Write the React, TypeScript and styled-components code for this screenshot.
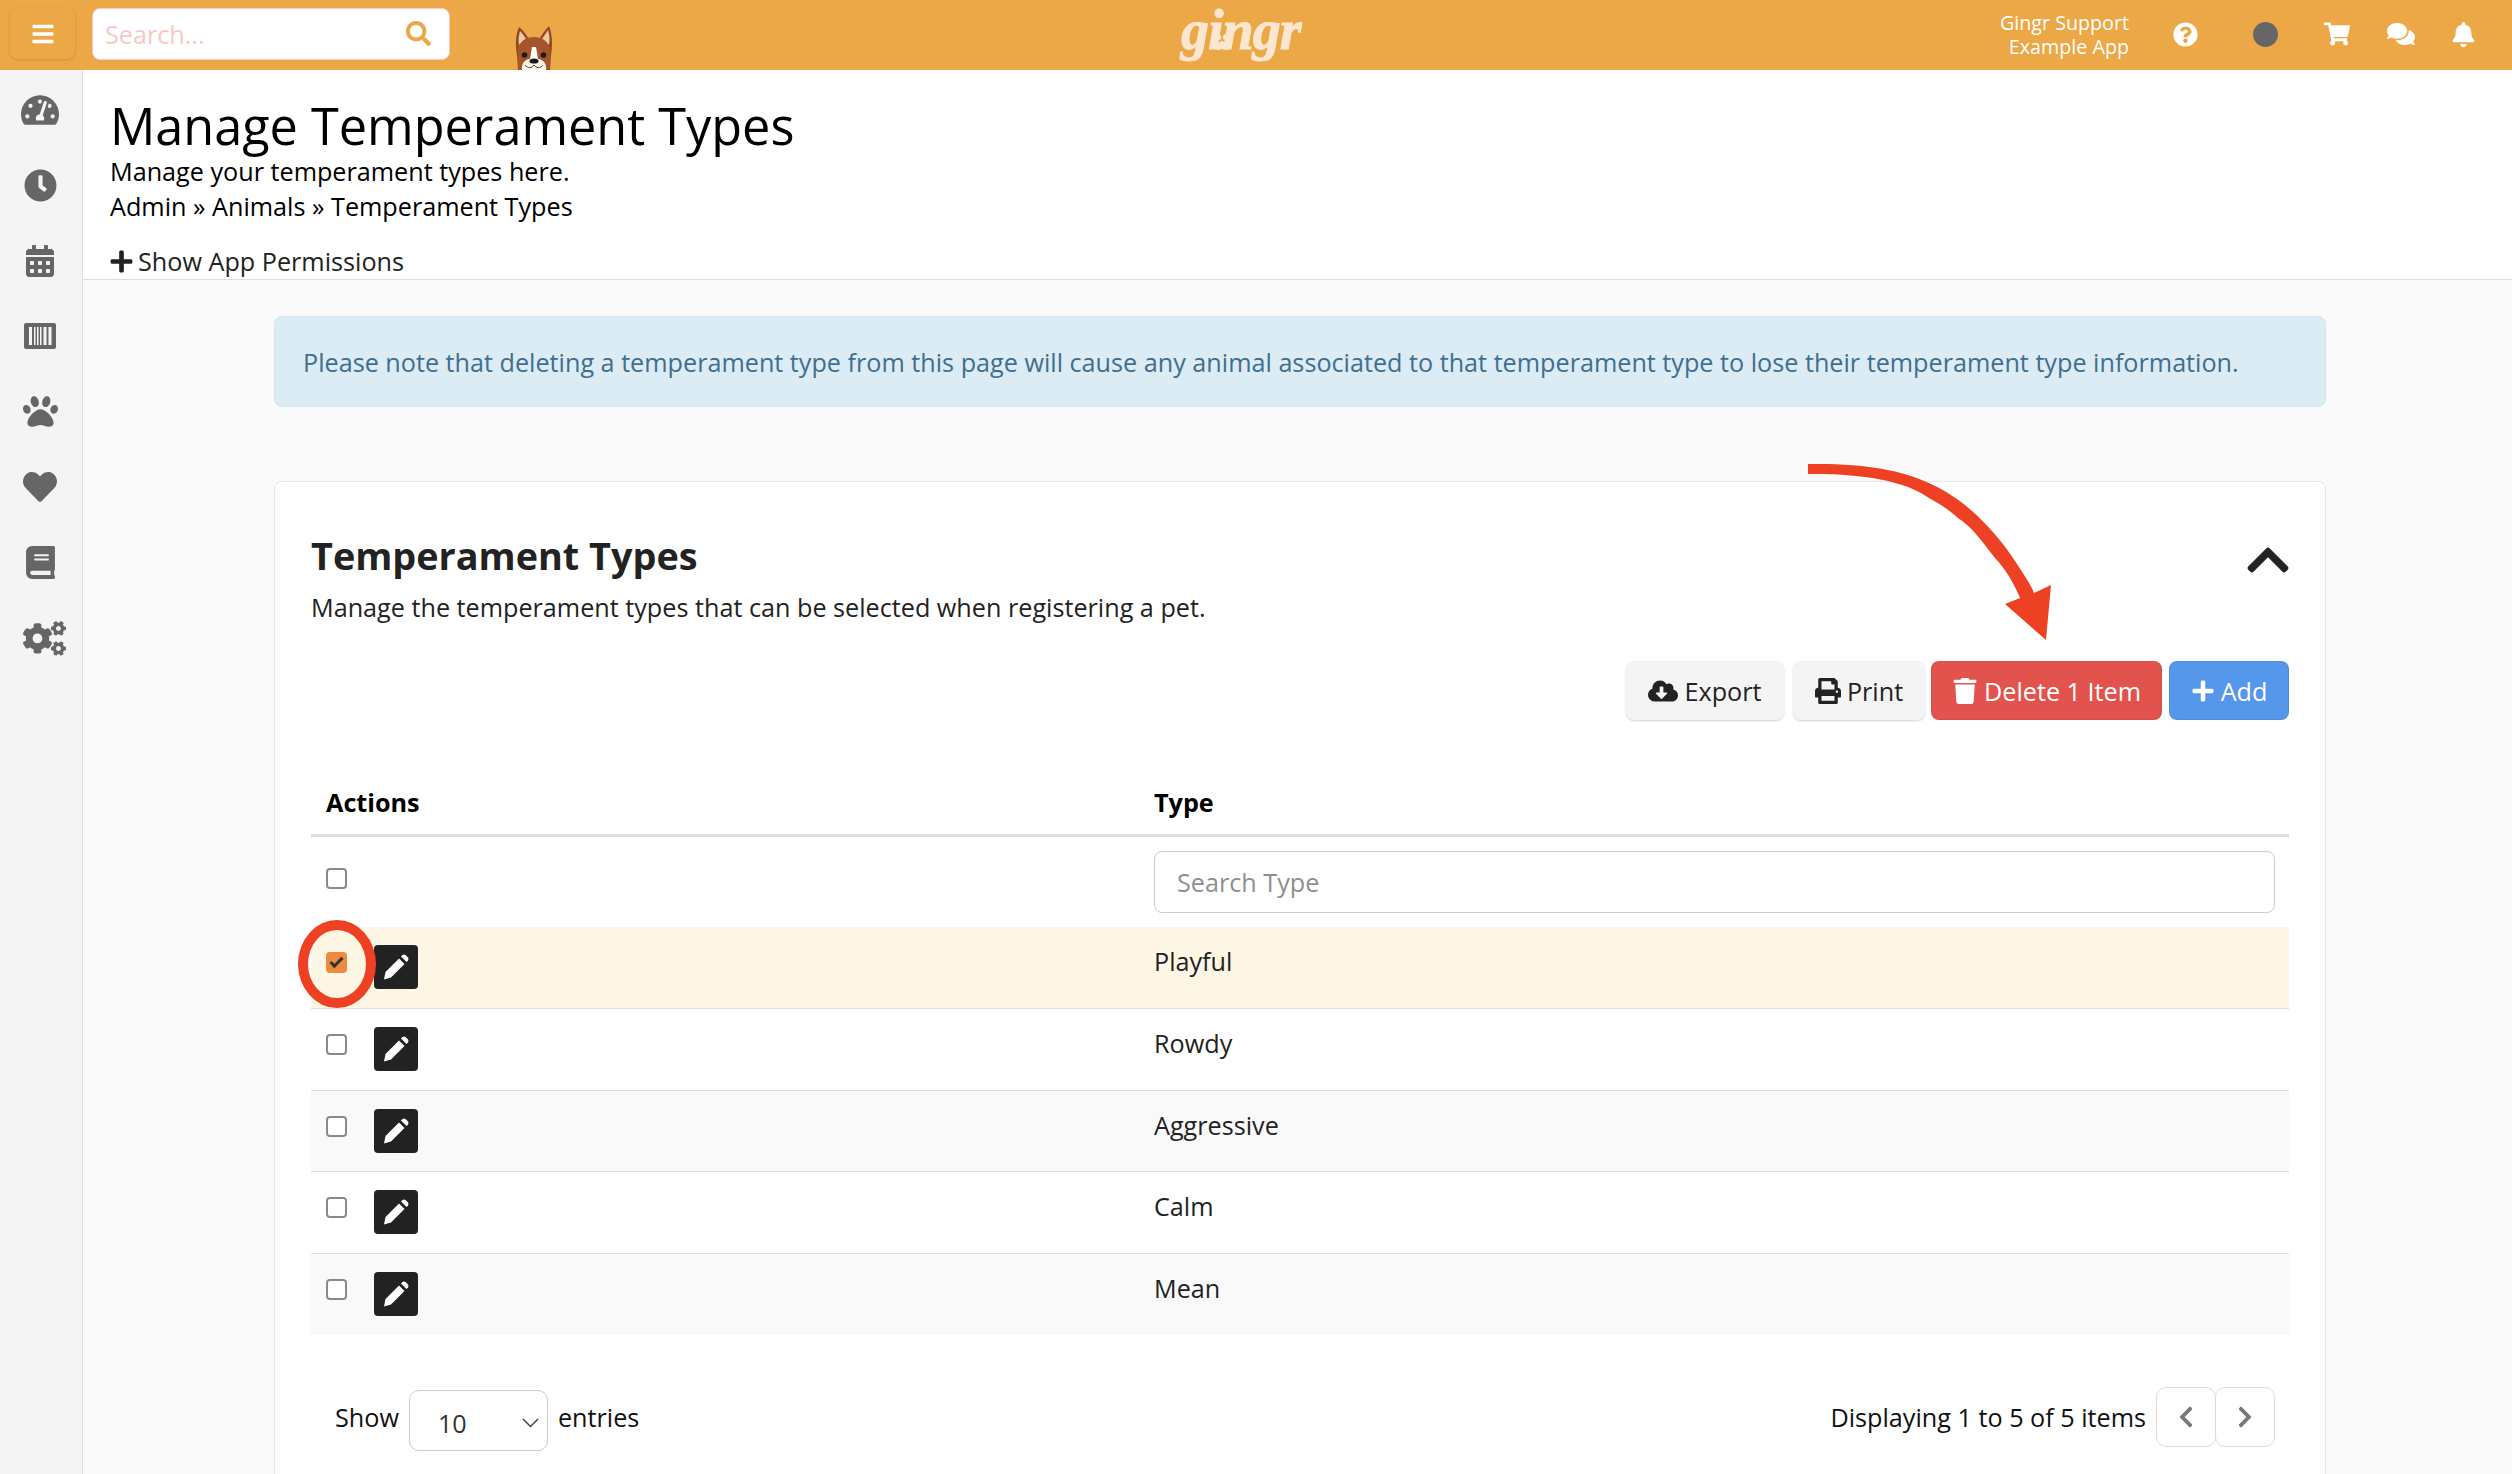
import * as React from 'react';
import styled, { createGlobalStyle } from 'styled-components';
import {
  FaBars,
  FaSearch,
  FaQuestionCircle,
  FaShoppingCart,
  FaComments,
  FaBell,
  FaTachometerAlt,
  FaClock,
  FaCalendarAlt,
  FaPaw,
  FaHeart,
  FaBook,
  FaCogs,
  FaPlus,
  FaChevronUp,
  FaChevronLeft,
  FaChevronRight,
  FaCloudDownloadAlt,
  FaPrint,
  FaTrash,
} from 'react-icons/fa';

const rows = ['Playful', 'Rowdy', 'Aggressive', 'Calm', 'Mean'];

const GlobalStyle = createGlobalStyle`
  html, body {
    margin: 0;
    height: 1474px;
    overflow: hidden;
    background: #fff;
    font-family: "Open Sans", "Liberation Sans", sans-serif;
    font-size: 25.2px;
    color: #000;
  }
`;

/** 바코드 아이콘 */
const BarcodeIcon = () => (
  <svg width="32" height="26" viewBox="0 0 32 26">
    <rect width="32" height="26" rx="2" fill="#666" />
    <path
      d="M5 4h3v18H5zM10 4h1.5v18H10zM13 4h1.5v18H13zM16 4h1.5v18H16zM19.5 4h3v18h-3zM24.5 4h3v18h-3z"
      fill="#f4f4f4"
    />
  </svg>
);

/** 상단 강아지 */
const DogIcon = () => (
  <svg width="38" height="45" viewBox="0 0 38 45">
    <path d="M2 30 C0 18 1 9 4 2 C8 5 11 9 13 13 L25 13 C28 8 31 4 34 1 C37 9 38 19 36 30 L35 45 L3 45 Z" fill="#8f4a25" />
    <path d="M4 20 C3 14 4 10 5 6 C7 8 9.500 11 11 14 Z" fill="#eec9a4" />
    <path d="M27 14 C29 11 31 8 33 5 C34.500 10 35 15 34 20 Z" fill="#eec9a4" />
    <path d="M3 45 L3 24 C5 16 11 12 19 12 C27 12 33 16 35 24 L35 45 Z" fill="#a5552b" />
    <path d="M17 22 L21 22 L23 34 L15 34 Z" fill="#fff" />
    <path d="M7 45 C6 40 9 35 14 34 L24 34 C29 35 32 40 31 45 Z" fill="#fbf3e8" />
    <circle cx="9.500" cy="30" r="2.800" fill="#1d1a18" />
    <circle cx="28.500" cy="30" r="2.800" fill="#1d1a18" />
    <ellipse cx="19" cy="36" rx="4.500" ry="2.600" fill="#1d1a18" />
    <path d="M10 40 C13 44 17 43 19 40 C21 43 25 44 28 40" stroke="#5a4030" strokeWidth="1" fill="none" />
  </svg>
);

/** 수정 버튼 연필 */
const PencilIcon = () => (
  <svg width="26" height="26" viewBox="0 0 26 26">
    <path d="M1 25.500 L2.500 18 L16 4.500 L21.500 10 L8 23.500 Z" fill="#fff" />
    <path d="M18 2.500 L19.500 1 Q21 0 22.500 1 L25 3.500 Q26 5 25 6.500 L23.500 8 Z" fill="#fff" />
  </svg>
);

const Arrow = () => (
  <svg width="260" height="185" viewBox="0 0 260 185">
    <path
      d="M8 3 C60 2 100 8 131 23 C165 38 195 70 213 97 C225 115 232 126 234 132 L251 124 L246 179 L205 143 L220 137 C212 118 205 108 195 97 C180 78 172 66 158 57 C145 45 130 38 121 32 C100 20 60 12 8 13 Z"
      fill="#ee4023"
    />
  </svg>
);

const App = () => {
  return (
    <Page>
      <GlobalStyle />
      <Topbar>
        <MenuButton>
          <FaBars size={24} />
        </MenuButton>
        <SearchBox>
          <SearchInput placeholder="Search..." />
          <FaSearch size={25} color="#eca746" />
        </SearchBox>
        <Dog>
          <DogIcon />
        </Dog>
        <Logo>
          <LogoPaw>
            <FaPaw size={18} />
          </LogoPaw>
          gingr
        </Logo>
        <TopRight>
          <UserName>
            Gingr Support
            <br />
            Example App
          </UserName>
          <TopIcon $width={70}>
            <FaQuestionCircle size={25} />
          </TopIcon>
          <TopIcon $width={90}>
            <Avatar />
          </TopIcon>
          <TopIcon $width={54}>
            <FaShoppingCart size={26} />
          </TopIcon>
          <TopIcon $width={74}>
            <FaComments size={28} />
          </TopIcon>
          <TopIcon $width={50}>
            <FaBell size={25} />
          </TopIcon>
        </TopRight>
      </Topbar>
      <Body>
        <Sidebar>
          <SideItem><FaTachometerAlt size={38} /></SideItem>
          <SideItem><FaClock size={33} /></SideItem>
          <SideItem><FaCalendarAlt size={32} /></SideItem>
          <SideItem><BarcodeIcon /></SideItem>
          <SideItem><FaPaw size={35} /></SideItem>
          <SideItem><FaHeart size={34} /></SideItem>
          <SideItem><FaBook size={33} /></SideItem>
          <SideItem $shift={8}><FaCogs size={43} /></SideItem>
        </Sidebar>
        <Main>
          <PageHeader>
            <PageTitle>Manage Temperament Types</PageTitle>
            <HeaderLine>Manage your temperament types here.</HeaderLine>
            <HeaderLine>Admin » Animals » Temperament Types</HeaderLine>
            <PermissionLine>
              <FaPlus size={25} />
              Show App Permissions
            </PermissionLine>
          </PageHeader>
          <Content>
            <Alert>
              Please note that deleting a temperament type from this page will cause any animal
              associated to that temperament type to lose their temperament type information.
            </Alert>
            <Card>
              <ArrowMark>
                <Arrow />
              </ArrowMark>
              <CardHead>
                <CardTitle>Temperament Types</CardTitle>
                <Collapse>
                  <FaChevronUp size={48} />
                </Collapse>
              </CardHead>
              <CardText>Manage the temperament types that can be selected when registering a pet.</CardText>
              <Toolbar>
                <Button $width={158} $after={3}>
                  <FaCloudDownloadAlt size={30} />
                  Export
                </Button>
                <Button $width={132}>
                  <FaPrint size={26} />
                  Print
                </Button>
                <Button $width={231} $after={1} $kind="danger">
                  <FaTrash size={26} />
                  Delete 1 Item
                </Button>
                <Button $width={120} $kind="primary">
                  <FaPlus size={24} />
                  Add
                </Button>
              </Toolbar>
              <Table>
                <thead>
                  <tr>
                    <HeadCell $width={843}>Actions</HeadCell>
                    <HeadCell>Type</HeadCell>
                  </tr>
                </thead>
                <tbody>
                  <tr>
                    <FilterCell>
                      <Check type="checkbox" />
                    </FilterCell>
                    <FilterCell>
                      <FilterInput placeholder="Search Type" />
                    </FilterCell>
                  </tr>
                  {rows.map((name, index) => (
                    <Row key={name} $selected={index === 0} $odd={index % 2 === 0}>
                      <Cell>
                        <ActionGroup>
                          <Check type="checkbox" defaultChecked={index === 0} />
                          <EditButton>
                            <PencilIcon />
                          </EditButton>
                        </ActionGroup>
                        {index === 0 && <CheckRing />}
                      </Cell>
                      <Cell>{name}</Cell>
                    </Row>
                  ))}
                </tbody>
              </Table>
              <Footer>
                <Entries>
                  Show
                  <PageSize>
                    10
                    <svg width="17" height="10" viewBox="0 0 17 10">
                      <path d="M1 1l7.500 7.500L16 1" stroke="#444" strokeWidth="1.500" fill="none" />
                    </svg>
                  </PageSize>
                  entries
                </Entries>
                <Paging>
                  Displaying 1 to 5 of 5 items
                  <Pager>
                    <PagerButton><FaChevronLeft size={24} /></PagerButton>
                    <PagerButton><FaChevronRight size={24} /></PagerButton>
                  </Pager>
                </Paging>
              </Footer>
            </Card>
          </Content>
        </Main>
      </Body>
    </Page>
  );
};

const Page = styled.div`
  width: 2512px;
  height: 1474px;
  overflow: hidden;
  display: flex;
  flex-direction: column;
`;

const Topbar = styled.header`
  height: 70px;
  flex: none;
  display: flex;
  align-items: center;
  background: #eca746;
  color: #fff;
  padding: 0 24px 0 10px;
`;

const MenuButton = styled.div`
  width: 65px;
  height: 51px;
  margin-top: -3px;
  border-radius: 8px;
  display: flex;
  align-items: center;
  justify-content: center;
  background: #eca746;
  box-shadow: 0 1px 3px rgba(0, 0, 0, 0.14);
`;

const SearchBox = styled.div`
  width: 358px;
  height: 52px;
  margin: -3px 0 0 17px;
  box-sizing: border-box;
  padding: 0 18px 0 12px;
  display: flex;
  align-items: center;
  background: #fff;
  border: 1px solid #f8c9c4;
  border-radius: 8px;
`;

const SearchInput = styled.input`
  flex: 1;
  min-width: 0;
  border: 0;
  outline: 0;
  padding: 0;
  font: inherit;
  font-size: 25.2px;
  &::placeholder {
    color: #f8c9c4;
    opacity: 1;
  }
`;

const Dog = styled.div`
  align-self: flex-end;
  height: 45px;
  margin-left: 65px;
  svg {
    display: block;
  }
`;

const Logo = styled.div`
  position: relative;
  align-self: flex-start;
  margin-left: 628px;
  width: 122px;
  font-family: "Liberation Serif", serif;
  font-style: italic;
  font-weight: 700;
  font-size: 56px;
  line-height: 60px;
  color: #fbe7cf;
  letter-spacing: -1px;
  -webkit-text-stroke: 1px #fbe7cf;
`;

const LogoPaw = styled.span`
  position: absolute;
  left: 32px;
  top: 4px;
  line-height: 1;
`;

const TopRight = styled.div`
  margin-left: auto;
  display: flex;
  align-items: center;
`;

const UserName = styled.div`
  font-size: 19.7px;
  line-height: 24px;
  text-align: right;
  margin-right: 21px;
`;

const TopIcon = styled.div<{ $width: number }>`
  width: ${(props) => props.$width}px;
  display: flex;
  justify-content: center;
  margin-top: -2px;
`;

const Avatar = styled.div`
  width: 25px;
  height: 25px;
  border-radius: 50%;
  background: #666;
`;

const Body = styled.div`
  flex: 1;
  min-height: 0;
  display: flex;
`;

const Sidebar = styled.nav`
  width: 83px;
  flex: none;
  box-sizing: border-box;
  background: #f4f4f4;
  border-right: 1px solid #ddd;
  padding: 2px 2px 0 0;
  color: #666;
`;

const SideItem = styled.div<{ $shift?: number }>`
  height: 75.5px;
  display: flex;
  align-items: center;
  justify-content: center;
  padding-left: ${(props) => props.$shift ?? 0}px;
  box-sizing: border-box;
`;

const Main = styled.main`
  flex: 1;
  min-width: 0;
  display: flex;
  flex-direction: column;
  background: #fafafa;
`;

const PageHeader = styled.div`
  height: 210px;
  flex: none;
  box-sizing: border-box;
  padding: 26.5px 0 0 27px;
  background: #fff;
  border-bottom: 1px solid #ddd;
`;

const PageTitle = styled.h1`
  margin: 0;
  font-size: 50.4px;
  line-height: 57px;
  font-weight: 400;
`;

const HeaderLine = styled.div`
  line-height: 35px;
`;

const PermissionLine = styled.div`
  display: flex;
  align-items: center;
  gap: 4px;
  line-height: 35px;
  margin: 20px 0 0 -1px;
  color: #222;
`;

const Content = styled.div`
  padding: 36px 186px 0 191px;
`;

const Alert = styled.div`
  height: 91px;
  box-sizing: border-box;
  display: flex;
  align-items: center;
  padding: 1px 28px 0;
  white-space: nowrap;
  background: #dcecf5;
  border: 1px solid #d2e6f0;
  border-radius: 8px;
  color: #3f6e8e;
`;

const Card = styled.section`
  position: relative;
  margin-top: 74px;
  box-sizing: border-box;
  padding: 48.5px 36px 40px;
  background: #fff;
  border: 1px solid #e6e6e6;
  border-radius: 8px;
`;

const ArrowMark = styled.div`
  position: absolute;
  left: 1525px;
  top: -21px;
  svg {
    display: block;
  }
`;

const CardHead = styled.div`
  display: flex;
  justify-content: space-between;
  align-items: flex-start;
`;

const CardTitle = styled.h2`
  margin: 0;
  font-size: 37.8px;
  line-height: 50px;
  font-weight: 700;
  color: #222;
`;

const Collapse = styled.div`
  height: 25px;
  margin: 16.5px -3px 0 0;
  display: flex;
  align-items: center;
  color: #222;
`;

const CardText = styled.p`
  margin: 7.5px 0 0;
  line-height: 38px;
  color: #222;
`;

const Toolbar = styled.div`
  margin-top: 35px;
  display: flex;
  justify-content: flex-end;
  gap: 6px;
`;

const buttonColors = {
  plain: '#f4f4f4',
  danger: '#e2534d',
  primary: '#5597ea',
};

const Button = styled.div<{ $width: number; $after?: number; $kind?: 'danger' | 'primary' }>`
  width: ${(props) => props.$width}px;
  height: 59px;
  margin-right: ${(props) => props.$after ?? 0}px;
  box-sizing: border-box;
  display: flex;
  align-items: center;
  justify-content: center;
  gap: 6px;
  border-radius: 8px;
  background: ${(props) => buttonColors[props.$kind ?? 'plain']};
  color: ${(props) => (props.$kind ? '#fff' : '#222')};
  box-shadow: ${(props) =>
    props.$kind ? 'inset 0 0 0 1px rgba(0, 0, 0, 0.06)' : '0 1px 2px rgba(0, 0, 0, 0.18)'};
`;

const Table = styled.table`
  width: 100%;
  margin-top: 50px;
  border-collapse: collapse;
  table-layout: fixed;
`;

const HeadCell = styled.th<{ $width?: number }>`
  ${(props) => (props.$width ? `width: ${props.$width}px;` : '')}
  height: 65px;
  box-sizing: border-box;
  padding: 1px 15px 0 15px;
  text-align: left;
  font-weight: 700;
  border-bottom: 3px solid #ddd;
  &:last-child {
    padding-left: 0;
  }
`;

const FilterCell = styled.td`
  height: 92px;
  box-sizing: border-box;
  padding: 24px 15px 0;
  vertical-align: top;
  &:last-child {
    padding: 14px 14px 0 0;
  }
`;

const FilterInput = styled.input`
  display: block;
  width: 100%;
  height: 62px;
  box-sizing: border-box;
  padding: 0 22px;
  border: 1px solid #ccc;
  border-radius: 8px;
  font: inherit;
  &::placeholder {
    color: #8f8f8f;
    opacity: 1;
  }
`;

const Row = styled.tr<{ $selected: boolean; $odd: boolean }>`
  background: ${(props) => (props.$selected ? '#fdf6e4' : props.$odd ? '#f9f9f9' : '#fff')};
  &:not(:last-child) td {
    border-bottom: 1px solid #ddd;
  }
`;

const Cell = styled.td`
  position: relative;
  height: 81.6px;
  box-sizing: border-box;
  padding: 15px 0 0;
  vertical-align: top;
  line-height: 38px;
  color: #222;
`;

const ActionGroup = styled.div`
  display: flex;
  align-items: flex-start;
  gap: 27px;
  padding: 3px 0 0 15px;
`;

const Check = styled.input`
  appearance: none;
  display: block;
  width: 21px;
  height: 21px;
  margin: 7px 0 0;
  box-sizing: border-box;
  background: #fff;
  border: 2px solid #8a8a8a;
  border-radius: 4px;
  &:checked {
    background: #ec8b3e;
    border: 0;
  }
  &:checked::after {
    content: '';
    display: block;
    width: 7px;
    height: 13px;
    box-sizing: border-box;
    border: solid #333;
    border-width: 0 3px 3px 0;
    transform: translate(7px, 2.5px) rotate(45deg);
  }
`;

const EditButton = styled.div`
  width: 44px;
  height: 44px;
  border-radius: 4px;
  background: #222;
  display: flex;
  align-items: center;
  justify-content: center;
`;

const CheckRing = styled.div`
  position: absolute;
  left: -13px;
  top: -7px;
  width: 78px;
  height: 88px;
  box-sizing: border-box;
  border: 10px solid #ee4023;
  border-radius: 50%;
`;

const Footer = styled.div`
  margin-top: 49px;
  display: flex;
  justify-content: space-between;
  align-items: center;
  padding: 0 15px 0 24px;
  color: #111;
`;

const Entries = styled.div`
  display: flex;
  align-items: center;
  gap: 10px;
`;

const PageSize = styled.div`
  width: 139px;
  height: 61px;
  margin-top: 6px;
  box-sizing: border-box;
  padding: 6px 8px 0 28px;
  display: flex;
  align-items: center;
  justify-content: space-between;
  border: 1px solid #ccc;
  border-radius: 10px;
  color: #333;
`;

const Paging = styled.div`
  display: flex;
  align-items: center;
  gap: 10px;
`;

const Pager = styled.div`
  display: flex;
`;

const PagerButton = styled.div`
  width: 60px;
  height: 60px;
  box-sizing: border-box;
  margin-right: -1px;
  display: flex;
  align-items: center;
  justify-content: center;
  border: 1px solid #ddd;
  border-radius: 10px;
  color: #777;
`;

export default App;
